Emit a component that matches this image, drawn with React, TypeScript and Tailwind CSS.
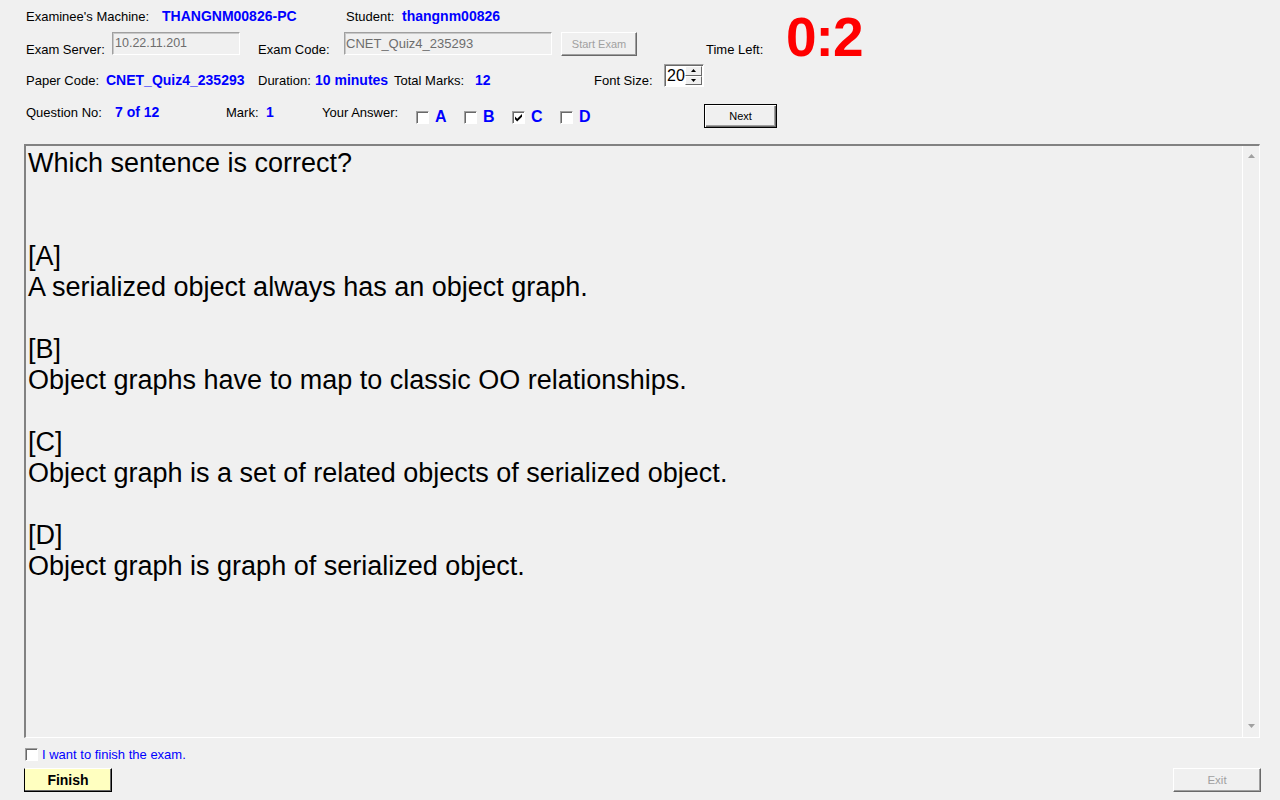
import React from "react";

const FONT = "font-['Liberation_Sans',Arial,sans-serif]";

const Label = ({ children, w }: { children: React.ReactNode; w?: string }) => (
  <span className={`block shrink-0 text-[13px] leading-[15px] text-black whitespace-nowrap ${w ?? ""}`}>{children}</span>
);

const Value = ({ children, w }: { children: React.ReactNode; w?: string }) => (
  <span className={`block shrink-0 text-[14px] font-bold leading-[15px] text-[#0000ff] whitespace-nowrap ${w ?? ""}`}>{children}</span>
);

const CheckBox = ({ checked }: { checked?: boolean }) => (
  <span className="flex h-[13px] w-[13px] shrink-0 items-center justify-center border border-t-[#a0a0a0] border-l-[#a0a0a0] border-r-white border-b-white bg-white shadow-[inset_1px_1px_0_#696969]">
    {checked && (
      <svg width="9" height="9" viewBox="0 0 9 9">
        <path d="M1 3.5 L3.2 5.7 L8 1 L8 3.8 L3.2 8.5 L1 6.3 Z" fill="#000" />
      </svg>
    )}
  </span>
);

const Answer = ({ letter, checked }: { letter: string; checked?: boolean }) => (
  <div className="flex w-[48px] shrink-0 items-center gap-[6px] pt-[4px]">
    <CheckBox checked={checked} />
    <span className="block text-[16px] font-bold leading-[18px] text-[#0000ff]">{letter}</span>
  </div>
);

const lines: string[] = [
  "Which sentence is correct?",
  "",
  "",
  "[A]",
  "A serialized object always has an object graph.",
  "",
  "[B]",
  "Object graphs have to map to classic OO relationships.",
  "",
  "[C]",
  "Object graph is a set of related objects of serialized object.",
  "",
  "[D]",
  "Object graph is graph of serialized object.",
];

export default function App() {
  return (
    <div className={`${FONT} h-[800px] w-[1280px] overflow-hidden bg-[#f0f0f0] text-black leading-[15px]`}>
      {/* Top section: rows 1-2 plus timer */}
      <div className="flex h-[56px] items-start">
        <div className="w-[706px] shrink-0">
          {/* Row 1 */}
          <div className="mt-[8px] flex h-[16px] items-center pl-[26px]">
            <Label w="w-[136px]">Examinee's Machine:</Label>
            <Value w="w-[184px]">THANGNM00826-PC</Value>
            <Label w="w-[56px]">Student:</Label>
            <Value>thangnm00826</Value>
          </div>
          {/* Row 2 */}
          <div className="mt-[8px] flex h-[24px] items-end pl-[26px]">
            <Label w="w-[86px] mb-[-1px]">Exam Server:</Label>
            <div className="mb-[1px] flex h-[23px] w-[128px] shrink-0 items-start border border-t-[#a0a0a0] border-l-[#a0a0a0] border-r-white border-b-white pl-[2px] pt-[3px] text-[12.5px] leading-[15px] text-[#6d6d6d] shadow-[inset_1px_1px_0_#c8c8c8]">
              10.22.11.201
            </div>
            <Label w="w-[86px] ml-[18px] mb-[-1px]">Exam Code:</Label>
            <div className="mb-[1px] flex h-[23px] w-[208px] shrink-0 items-start border border-t-[#a0a0a0] border-l-[#a0a0a0] border-r-white border-b-white pl-[1px] pt-[3px] text-[13px] leading-[15px] text-[#6d6d6d] shadow-[inset_1px_1px_0_#c8c8c8]">
              CNET_Quiz4_235293
            </div>
            <div className="ml-[9px] flex h-[24px] w-[76px] shrink-0 items-center justify-center border border-t-white border-l-white border-r-[#696969] border-b-[#696969] text-[11px] text-[#a0a0a0] shadow-[inset_-1px_-1px_0_#a0a0a0]">
              Start Exam
            </div>
          </div>
        </div>
        <div className="flex h-[56px] w-[80px] shrink-0 items-end">
          <Label w="mb-[-1px]">Time Left:</Label>
        </div>
        <div className="mt-[10px] h-[55px] shrink-0 text-[55px] font-bold leading-[55px] tracking-[-1px] text-[#ff0000]">0:2</div>
      </div>

      {/* Row 3 */}
      <div className="mt-[8px] flex h-[24px] items-end pl-[26px]">
        <Label w="w-[80px]">Paper Code:</Label>
        <Value w="w-[152px]">CNET_Quiz4_235293</Value>
        <Label w="w-[57px]">Duration:</Label>
        <Value w="w-[79px]">10 minutes</Value>
        <Label w="w-[81px]">Total Marks:</Label>
        <Value w="w-[119px]">12</Value>
        <Label w="w-[70px]">Font Size:</Label>
        <div className="mb-[1px] flex h-[23px] w-[40px] shrink-0 items-stretch border border-t-[#a0a0a0] border-l-[#a0a0a0] border-r-white border-b-white bg-white shadow-[inset_1px_1px_0_#696969]">
          <div className="flex flex-1 items-center pl-[2px] text-[16px] leading-[18px]">20</div>
          <div className="my-[1px] mr-[1px] flex w-[17px] flex-col">
            <div className="flex flex-1 items-center justify-center border border-t-white border-l-white border-r-[#696969] border-b-[#696969] bg-[#f0f0f0]">
              <svg width="5" height="3" viewBox="0 0 5 3"><path d="M2.5 0 L5 3 L0 3 Z" fill="#000" /></svg>
            </div>
            <div className="flex flex-1 items-center justify-center border border-t-white border-l-white border-r-[#696969] border-b-[#696969] bg-[#f0f0f0]">
              <svg width="5" height="3" viewBox="0 0 5 3"><path d="M0 0 L5 0 L2.5 3 Z" fill="#000" /></svg>
            </div>
          </div>
        </div>
      </div>

      {/* Row 4 */}
      <div className="mt-[16px] flex h-[24px] items-start pl-[26px]">
        <Label w="w-[89px] mt-[1px]">Question No:</Label>
        <Value w="w-[111px] mt-[1px]">7 of 12</Value>
        <Label w="w-[40px] mt-[1px]">Mark:</Label>
        <Value w="w-[56px] mt-[1px]">1</Value>
        <Label w="w-[94px] mt-[1px]">Your Answer:</Label>
        <Answer letter="A" />
        <Answer letter="B" />
        <Answer letter="C" checked />
        <Answer letter="D" />
        <div className="ml-[96px] flex h-[24px] w-[73px] shrink-0 items-center justify-center border border-black bg-[#f0f0f0] text-[11px] text-black shadow-[inset_1px_1px_0_white,inset_-1px_-1px_0_#696969,inset_-2px_-2px_0_#a0a0a0]">
          Next
        </div>
      </div>

      {/* Question panel */}
      <div className="ml-[24px] mt-[16px] flex h-[594px] w-[1236px] border-t-2 border-l-2 border-r border-b border-t-[#828282] border-l-[#828282] border-r-white border-b-white">
        <div className="flex-1 overflow-hidden pl-[2px] pt-[2px] text-[27px] text-black">
          {lines.map((l, i) => (
            <div key={i} className="h-[31px] whitespace-nowrap leading-[31px]">
              {l}
            </div>
          ))}
        </div>
        <div className="flex w-[17px] flex-col justify-between border-l border-white bg-[#f0f0f0] pb-[9px] pt-[8px]">
          <div className="flex justify-center">
            <svg width="7" height="4" viewBox="0 0 7 4"><path d="M3.5 0 L7 4 L0 4 Z" fill="#a0a0a0" /></svg>
          </div>
          <div className="flex justify-center">
            <svg width="7" height="4" viewBox="0 0 7 4"><path d="M0 0 L7 0 L3.5 4 Z" fill="#a0a0a0" /></svg>
          </div>
        </div>
      </div>

      {/* Finish checkbox */}
      <div className="ml-[25px] mt-[10px] flex h-[13px] items-center gap-[4px]">
        <CheckBox />
        <span className="block text-[13px] leading-[15px] text-[#0000ff]">I want to finish the exam.</span>
      </div>

      {/* Buttons */}
      <div className="mt-[7px] flex items-center justify-between pl-[24px] pr-[19px]">
        <div className="flex h-[24px] w-[88px] items-center justify-center border border-t-white border-l-black border-r-black border-b-black bg-[#ffffc0] text-[14px] font-bold text-black shadow-[inset_-1px_-1px_0_#696969]">
          Finish
        </div>
        <div className="flex h-[24px] w-[88px] items-center justify-center border border-t-white border-l-white border-r-[#696969] border-b-[#696969] text-[11.5px] text-[#a0a0a0] shadow-[inset_-1px_-1px_0_#a0a0a0]">
          Exit
        </div>
      </div>
    </div>
  );
}
